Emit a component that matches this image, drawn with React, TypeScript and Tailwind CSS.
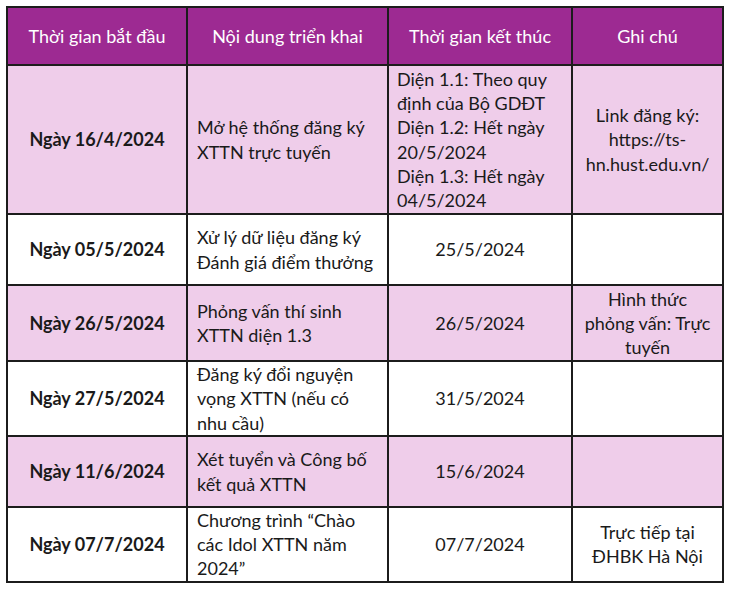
import React from 'react';

const rows = [
  {
    start: 'Ngày 16/4/2024',
    content: ['Mở hệ thống đăng ký', 'XTTN trực tuyến'],
    end: ['Diện 1.1: Theo quy', 'định của Bộ GDĐT', 'Diện 1.2: Hết ngày', '20/5/2024', 'Diện 1.3: Hết ngày', '04/5/2024'],
    endLeft: true,
    note: ['Link đăng ký:', 'https://ts-', 'hn.hust.edu.vn/'],
    pink: true,
    h: 'h-[149px]',
  },
  {
    start: 'Ngày 05/5/2024',
    content: ['Xử lý dữ liệu đăng ký', 'Đánh giá điểm thưởng'],
    end: ['25/5/2024'],
    note: [],
    pink: false,
    h: 'h-[71px]',
  },
  {
    start: 'Ngày 26/5/2024',
    content: ['Phỏng vấn thí sinh', 'XTTN diện 1.3'],
    end: ['26/5/2024'],
    note: ['Hình thức', 'phỏng vấn: Trực', 'tuyến'],
    pink: true,
    h: 'h-[76px]',
  },
  {
    start: 'Ngày 27/5/2024',
    content: ['Đăng ký đổi nguyện', 'vọng XTTN (nếu có', 'nhu cầu)'],
    end: ['31/5/2024'],
    note: [],
    pink: false,
    h: 'h-[75px]',
  },
  {
    start: 'Ngày 11/6/2024',
    content: ['Xét tuyển và Công bố', 'kết quả XTTN'],
    end: ['15/6/2024'],
    note: [],
    pink: true,
    h: 'h-[71px]',
  },
  {
    start: 'Ngày 07/7/2024',
    content: ['Chương trình “Chào', 'các Idol XTTN năm', '2024”'],
    end: ['07/7/2024'],
    note: ['Trực tiếp tại', 'ĐHBK Hà Nội'],
    pink: false,
    h: 'h-[74px]',
  },
];

function Lines({ items }: { items: string[] }) {
  return (
    <>
      {items.map((t, i) => (
        <div key={i} className="whitespace-nowrap">{t}</div>
      ))}
    </>
  );
}

export default function App() {
  const cell = 'border-2 border-[#1c1c1c] align-middle p-0';
  return (
    <div className="w-[730px] h-[589px] bg-white pt-[6px] pl-[6px]" style={{ fontFamily: 'Lato, "Noto Sans", sans-serif' }}>
      <table className="border-collapse table-fixed text-[18px] leading-[24.2px] text-[#1a1a1a]">
        <colgroup>
          <col className="w-[180px]" />
          <col className="w-[201px]" />
          <col className="w-[184px]" />
          <col className="w-[151px]" />
        </colgroup>
        <thead>
          <tr className="h-[58px] bg-[#9d2a92] text-white">
            <th className={cell + ' font-normal text-center'}>Thời gian bắt đầu</th>
            <th className={cell + ' font-normal text-center'}>Nội dung triển khai</th>
            <th className={cell + ' font-normal text-center'}>Thời gian kết thúc</th>
            <th className={cell + ' font-normal text-center'}>Ghi chú</th>
          </tr>
        </thead>
        <tbody>
          {rows.map((r, i) => (
            <tr key={i} className={r.h + ' ' + (r.pink ? 'bg-[#efcdea]' : 'bg-white')}>
              <td className={cell + ' font-bold text-center'}>{r.start}</td>
              <td className={cell + ' text-left pl-[9px]'}><Lines items={r.content} /></td>
              <td className={cell + (r.endLeft ? ' text-left pl-[8px]' : ' text-center')}><Lines items={r.end} /></td>
              <td className={cell + ' text-center'}><Lines items={r.note} /></td>
            </tr>
          ))}
        </tbody>
      </table>
    </div>
  );
}
